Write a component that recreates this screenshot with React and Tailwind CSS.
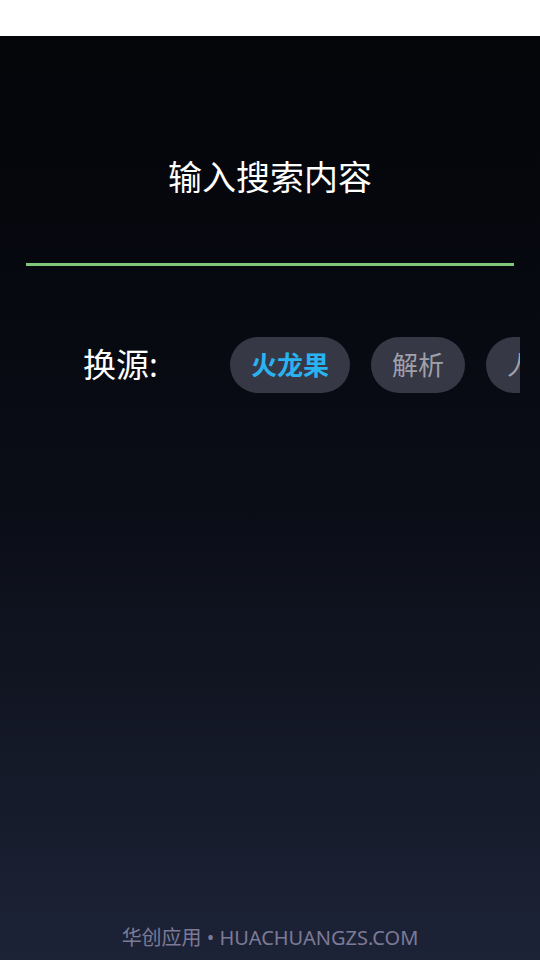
import { useState } from 'react'

const sources = ['火龙果', '解析', '人人影视', '备用']

export default function App() {
  const [active, setActive] = useState(0)

  return (
    <div className="flex min-h-[960px] w-[540px] flex-col bg-white font-['Noto_Sans','Noto_Sans_CJK_SC',sans-serif]">
      {/* ── status strip ─────────────────────────────── */}
      <div className="h-9 shrink-0 bg-white" />

      {/* ── main ─────────────────────────────────────── */}
      <div className="flex h-[924px] flex-col bg-linear-to-b from-[#040509] via-[#0a0d16] to-[#1d2337]">
        <div className="mx-[26px] border-b-[3px] border-[#80c77c] pt-[121px] pb-[66px]">
          <p className="text-center text-[34px] leading-[40px] text-white">输入搜索内容</p>
        </div>

        <div className="mt-[71px] flex items-center pl-[83px]">
          <span className="w-[147px] shrink-0 text-[33px] leading-[40px] text-white">换源:</span>
          <div className="flex w-[290px] gap-[21px] overflow-hidden">
            {sources.map((s, i) => (
              <button
                key={s}
                onClick={() => setActive(i)}
                className={
                  i === active
                    ? 'h-14 shrink-0 rounded-full bg-[#363845] px-[21px] text-[26px] font-bold text-[#2ab3f1]'
                    : 'h-14 shrink-0 rounded-full bg-[#363845] px-[21px] text-[26px] text-[#a0a0aa]'
                }
              >
                {s}
              </button>
            ))}
          </div>
        </div>

        <p className="mt-auto pb-[10px] text-center text-[20px] leading-[24px] text-[#7d7a97]">
          华创应用 • HUACHUANGZS.COM
        </p>
      </div>
    </div>
  )
}
